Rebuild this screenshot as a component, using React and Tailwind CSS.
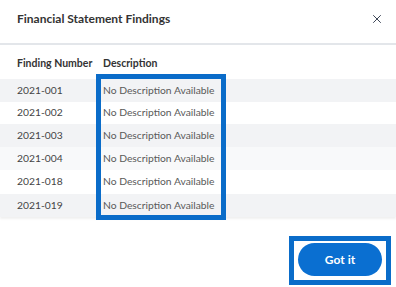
import { X } from "lucide-react";

const findings = [
  { id: "2021-001", bg: "bg-[#f2f3f5]", h: "h-[23px]" },
  { id: "2021-002", bg: "bg-white", h: "h-[22px]" },
  { id: "2021-003", bg: "bg-[#f2f3f5]", h: "h-[23px]" },
  { id: "2021-004", bg: "bg-[#f8f9fa]", h: "h-[23px]" },
  { id: "2021-018", bg: "bg-white", h: "h-[24px]" },
  { id: "2021-019", bg: "bg-[#f2f3f5]", h: "h-[23px]" },
];

export default function App() {
  return (
    <div className="relative h-[287px] w-[396px] overflow-hidden bg-white text-[#333]" style={{ fontFamily: "Lato, sans-serif" }}>
      <div className="flex h-[43px] items-start justify-between pl-[17px] pr-[12px] pt-[11px]">
        <h1 className="text-[12px] font-bold leading-[16px] text-[#333]">Financial Statement Findings</h1>
        <button className="mt-[1px] text-[#3b4354]" aria-label="Close">
          <X size={14} strokeWidth={1.7} />
        </button>
      </div>
      <div className="h-[2px] bg-[#e3e6ea]" />

      <div className="mt-[7px] flex h-[24px] items-center text-[10.5px] font-bold text-[#333]">
        <span className="w-[103px] pl-[17px]">Finding Number</span>
        <span>Description</span>
      </div>

      <div className="mt-[3px] shadow-[0_2px_2px_rgba(0,0,0,0.06)]">
        {findings.map((f) => (
          <div key={f.id} className={`flex items-center text-[10.3px] ${f.h} ${f.bg}`}>
            <span className="w-[103px] pl-[17px] text-[#444]">{f.id}</span>
            <span className="text-[#595959]">No Description Available</span>
          </div>
        ))}
      </div>

      <div className="mt-[26px] flex justify-end pr-[14px]">
        <button className="h-[33px] w-[84px] rounded-full bg-[#0a6fd1] text-[12px] font-bold text-white">Got it</button>
      </div>

      <div className="pointer-events-none absolute left-[96px] top-[74px] h-[146px] w-[130px] border-[5px] border-[#0a6cc9]" />
      <div className="pointer-events-none absolute left-[289px] top-[236px] h-[49px] w-[102px] border-[5px] border-[#0a6cc9]" />
    </div>
  );
}
